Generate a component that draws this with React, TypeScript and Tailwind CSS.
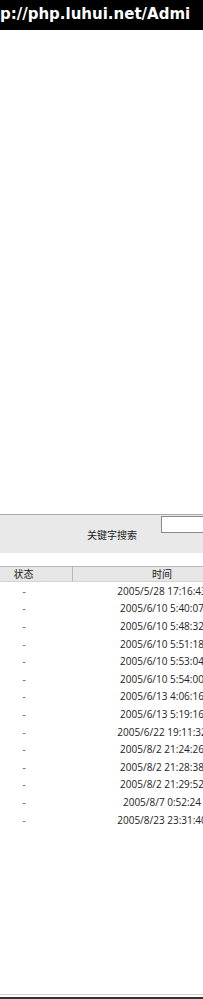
import React from 'react';

const rows: string[] = [
    '2005/5/28 17:16:43',
    '2005/6/10 5:40:07',
    '2005/6/10 5:48:32',
    '2005/6/10 5:51:18',
    '2005/6/10 5:53:04',
    '2005/6/10 5:54:00',
    '2005/6/13 4:06:16',
    '2005/6/13 5:19:16',
    '2005/6/22 19:11:32',
    '2005/8/2 21:24:26',
    '2005/8/2 21:28:38',
    '2005/8/2 21:29:52',
    '2005/8/7 0:52:24',
    '2005/8/23 23:31:40',
];

const App: React.FC = () => {
    return (
        <div className="w-[203px] h-[999px] overflow-hidden bg-white flex flex-col font-['Open_Sans','Noto_Sans_CJK_SC',sans-serif] text-[#222]">
            {/* title bar */}
            <div className="h-[30px] bg-black flex items-center overflow-hidden shrink-0">
                <span className="whitespace-nowrap text-white font-bold text-[15px] font-['DejaVu_Sans',sans-serif] leading-none pb-[2px]">
                    p://php.luhui.net/Admi
                </span>
            </div>

            <div className="h-[484px] shrink-0" />

            {/* search panel */}
            <div className="h-[39px] shrink-0 bg-[#e9e9e9] border-t border-[#a9a9a9] flex items-start">
                <span className="ml-[87px] mt-[15px] text-[10px] leading-none whitespace-nowrap font-['Noto_Sans_CJK_SC',sans-serif]">
                    关键字搜索
                </span>
                <div className="ml-[24px] mt-[1px] w-[60px] h-[17px] bg-white border border-[#8a8a8a] shrink-0" />
            </div>

            <div className="h-[13px] shrink-0" />

            {/* table */}
            <div className="w-[330px] text-[10px]">
                <div className="flex h-[16px] bg-[#e6e6e6] border-t border-[#b8b8b8] border-b border-b-[#d4d4d4] items-center">
                    <div className="w-[73px] pr-[25px] text-center border-r border-[#b8b8b8] leading-[14px] font-['Noto_Sans_CJK_SC',sans-serif] text-[10px]">状态</div>
                    <div className="w-[178px] text-center leading-[14px] font-['Noto_Sans_CJK_SC',sans-serif] text-[10px]">时间</div>
                </div>
                {rows.map((r) => (
                    <div key={r} className="flex h-[17.6px] items-center">
                        <div className="w-[73px] pr-[25px] text-center leading-none text-[#555]">-</div>
                        <div className="w-[178px] text-center leading-none whitespace-nowrap">{r}</div>
                    </div>
                ))}
            </div>

            <div className="flex-1" />

            {/* status bar */}
            <div className="h-[5px] shrink-0 border-t border-[#d0d0d0] bg-white flex flex-col justify-end">
                <div className="h-[2px] bg-[#333]" />
            </div>
        </div>
    );
};

export default App;
